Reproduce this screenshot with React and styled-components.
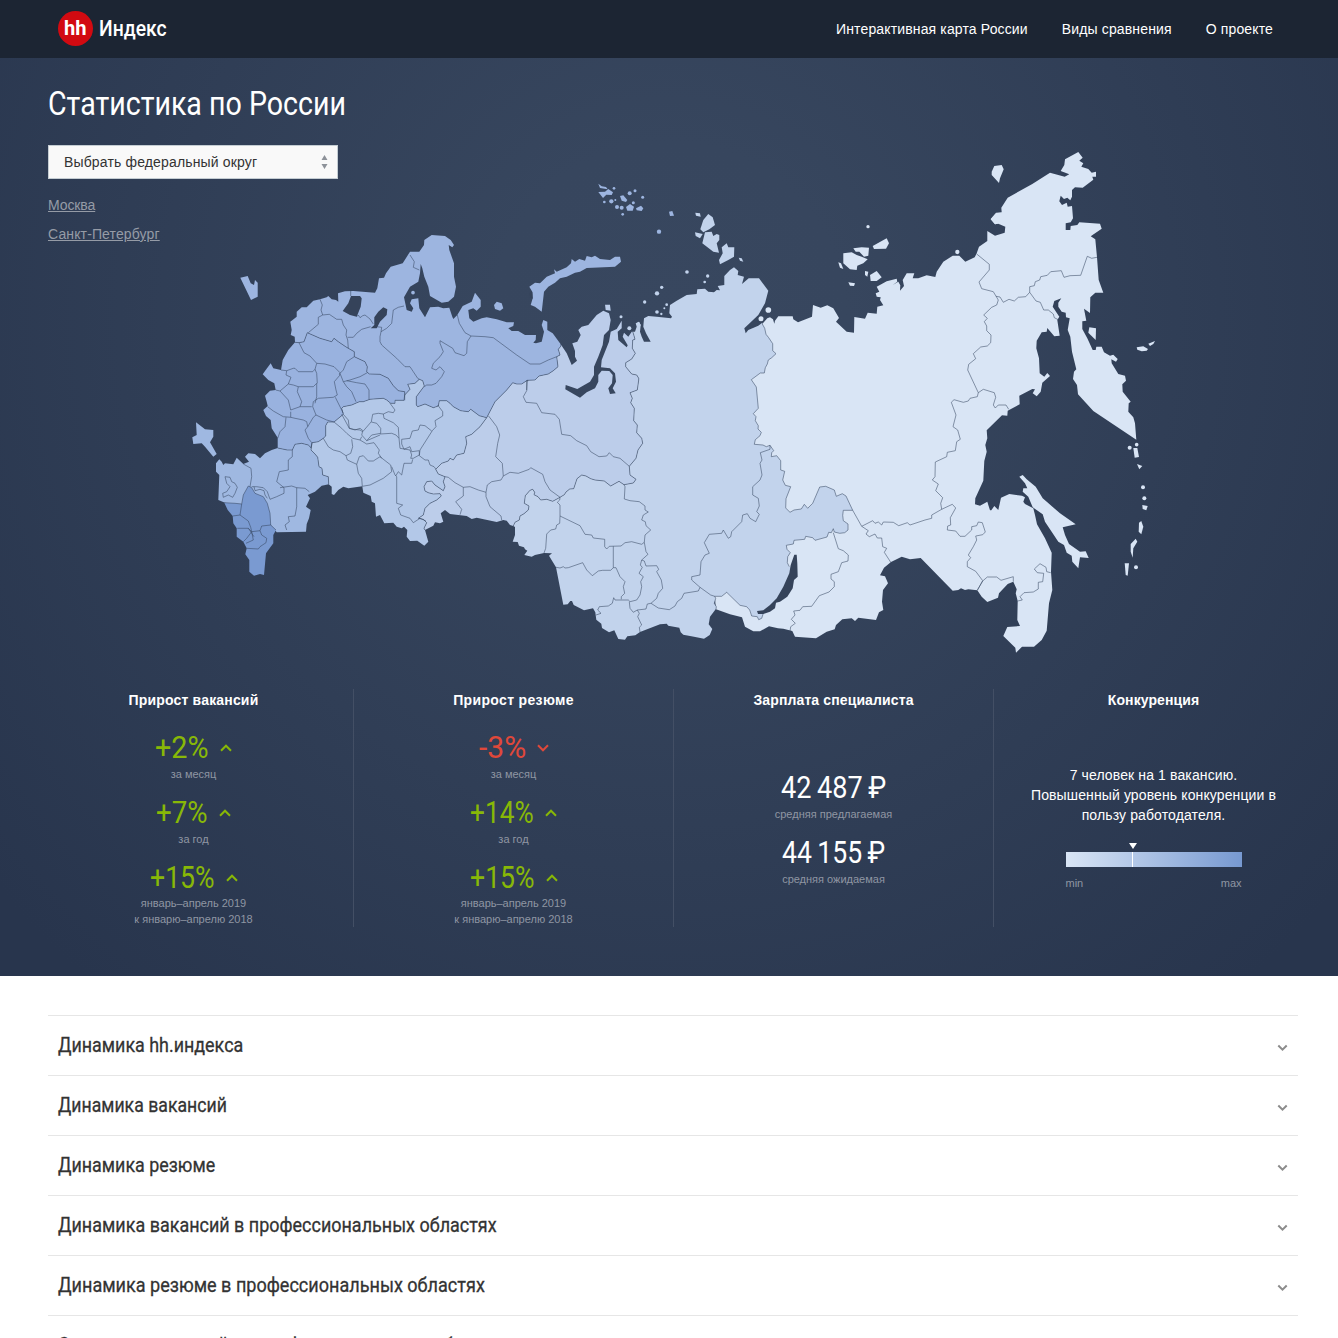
import React, { useLayoutEffect, useRef, useState } from 'react';
import styled, { createGlobalStyle } from 'styled-components';

const Global = createGlobalStyle`
  * { box-sizing: border-box; }
  html, body { margin: 0; padding: 0; }
  body {
    background: #fff;
    font-family: "Liberation Sans", Arial, sans-serif;
    font-size: 14px;
    line-height: 20px;
    color: #333;
    height: 1338px;
    overflow: hidden;
  }
`;

/* ---------- condensed display text ---------- */

const FitBox = styled.span`
  display: inline-block;
  width: ${(p) => p.$w}px;
  white-space: nowrap;
  text-align: left;
`;
const FitInner = styled.span`
  display: inline-block;
  transform-origin: 0 50%;
`;

function Condensed({ w, children }) {
  const ref = useRef(null);
  const [scale, setScale] = useState(1);
  useLayoutEffect(() => {
    setScale(w / ref.current.offsetWidth);
  }, [w, children]);
  return (
    <FitBox $w={w}>
      <FitInner ref={ref} style={{ transform: `scaleX(${scale})` }}>{children}</FitInner>
    </FitBox>
  );
}

/* ---------- map geometry ---------- */

const sheet = (ox, oy) => (text) => {
  const n = text.trim().split(/\s+/).map(Number);
  const out = [];
  for (let i = 0; i + 1 < n.length; i += 2) out.push([ox + n[i] / 3, oy + n[i + 1] / 3]);
  return out;
};
const west = sheet(180, 220);
const north = sheet(440, 160);
const mid = sheet(400, 380);
const taimyr = sheet(680, 200);
const baikal = sheet(680, 430);
const chukotka = sheet(940, 130);
const pacific = sheet(900, 380);

const rev = (pts) => [...pts].reverse();
const toPath = (pts, close) =>
  'M' + pts.map(([x, y]) => `${x.toFixed(1)} ${y.toFixed(1)}`).join('L') + (close ? 'Z' : '');

const COLORS = {
  nw: '#9db5e0',
  central: '#99b2df',
  south: '#9fb8e1',
  caucasus: '#7a9ad1',
  volga: '#b3c8e8',
  ural: '#bccdea',
  siberia: '#c2d3ec',
  east: '#d9e5f5',
  water: '#35435a',
};

const siberiaEast = [
  ...taimyr(`247 372 254 385 258 403 266 413 278 431 278 452 288 461 275 473 265 480 262 492 256 503 253 519 241 519 214 539 229 561 235 625 220 641 228 650 226 662 235 677 234 687 244 697 240 707 226 719 223 733`),
  ...baikal(`249 45 259 50 270 46 281 62 275 68 274 80 290 77 302 92 302 120 314 124 308 150 316 166 332 170 318 206 317 234 330 247 342 240 364 237 373 223 383 235 398 220 419 171 437 169 463 180 469 199 487 191 498 198 518 241 490 241 488 256 490 272 504 282 504 300 494 308 479 310 463 306 460 296 454 308 446 307 441 321 405 331 398 323 377 319 374 328 342 331 340 342 319 346 321 358 331 368 323 380 322 398 328 410`),
];
const baikalShore = baikal(`336 415 334 440 318 475 300 505 278 530 262 545`);
const siberiaSouthEast = baikal(`250 550 245 565 236 569 232 560 215 558 209 540 200 530 180 526 140 487 125 499 104 499 107 505 103 520 109 530 108 538`);
const siberiaCoastSouth = mid(`948 686 930 710 926 733 937 747 929 765 912 776 882 770 850 764 842 757 838 743 805 737 800 731 780 733 720 756 706 766 682 769 675 779 655 777 643 751 627 757 606 744 604 731 589 719 586 697 579 685 552 691 521 675 516 663 511 663 503 673 490 674 468 562 447 527 456 520 432 519 405 525 395 530 373 525 382 512 375 508 372 502 357 497 353 486 338 485 345 465 345 441 340 438`);
const siberiaWest = [
  ...mid(`340 438 345 427 358 420 360 408 372 401 385 390 387 378 373 370 376 347 390 331 398 328 404 337 402 344 414 350 422 360 440 358 458 364 480 352 493 344 498 336 509 327 521 326 531 296 545 285 558 288 572 296 585 300 613 303 632 318 657 304 672 314 700 309 708 298 690 285 688 259 708 235 714 210 728 190 725 175 710 158 712 135 701 122 703 85 692 68 697 55 690 38 712 30 716 0`),
  ...north(`596 655 590 645 575 642 557 620 557 608 575 597 586 580 577 565 578 540 585 538 580 520 578 515`),
];
const siberiaCoastNorth = north(`585 515 590 500 587 490 597 485 602 495 600 515 605 530 612 545 632 545 618 520 610 500 612 475 625 468 650 470 693 475 696 470 688 460 690 435 710 422 740 405 770 402 772 388 795 386 805 395 822 397 830 390 840 391 833 378 853 375 853 348 870 330 882 322 895 333 893 345 912 350 906 372 926 355 957 355 985 392 975 430 955 465 913 505 917 520 925 510 955 497 967 488`);
const siberia = [...siberiaEast, ...baikalShore, ...siberiaSouthEast, ...siberiaCoastSouth, ...siberiaWest, ...siberiaCoastNorth];

const east = [
  ...taimyr(`245 374 262 355 270 352 279 358 283 371 285 362 295 349 338 349 340 358 354 367 396 350 399 315 422 323 442 316 460 325 477 354 468 365 500 395 522 398 523 351 555 356 563 338 590 341 592 320 610 316 600 300 602 292 590 290 587 280 598 275 590 260 620 244 650 236 652 245 638 255 655 245 661 256 660 272 672 258 668 240 680 220 703 220 698 235 715 235 740 226 766 231 770 215 790 185 818 167 838 167 856 185 884 172 890 160`),
  ...chukotka(`117 350 142 333 142 303 165 317 194 308 196 290 175 281 165 283 152 268 170 249 185 247 184 233 203 203 277 162 330 128 374 140 388 133 362 123 373 105 375 88 415 66 428 83 418 92 430 100 424 110 445 117 455 128 468 125 468 140 457 140 460 149 428 173 405 172 396 180 396 200 391 211 382 203 372 207 362 197 358 214 366 225 380 218 383 230 396 228 399 265 392 277 377 280 377 300 391 300 392 288 412 285 418 277 480 281 485 296 452 319 466 328 471 382 476 450 490 488 466 488 451 502 450 549 432 536 439 572 427 574 427 597 442 625 458 660 467 660 469 650 485 650 492 667 510 677 520 674 533 687 528 695 514 688 515 700 535 732 555 737 558 752 547 763 548 785 572 815 566 820 565 845 580 862 585 880 589 929 460 843 414 793 411 765 399 747 402 725 409 718 396 665 391 620 383 600 389 565 378 562 377 548 365 545 355 530 355 518 364 505 343 513 338 530 358 560 352 570 359 617 343 619 322 594 320 605 305 607 290 632 289 655 297 685 299 730 313 740 322 729 330 738 307 758 302 785 290 799 278 790 285 778 277 777 238 797 239 823 203 842 202 857 186 856 140 901`),
  ...pacific(`262 175 256 195 260 215 253 243 250 302 226 355 225 373 240 377 262 365 270 391 274 391 283 378 295 390 303 353 328 342 366 347 375 352 370 365 375 372 400 385 405 405 411 433 435 475 455 518 453 575 457 630 447 670 440 752 425 780 402 800 366 800 348 818 346 803 310 768 322 741 360 738 352 720 353 663 347 640 350 628 340 605 323 612 297 640 294 653 262 666 245 650 232 631 205 628 195 630 183 625 175 630 158 632 62 534 30 538 5 530`),
  ...baikal(`633 396 612 413 600 436 615 439 624 460 609 480 606 515 610 540 597 547 588 570 535 563 525 573 515 565 487 568 468 585 464 598 440 605 408 625 345 620 337 603 310 596 294 595 267 589 240 604 220 604 195 590 186 562 150 553 108 538 104 499 160 480 200 400 180 100`),
  ...taimyr(`180 500 228 400`),
];

const nwUral = north(`362 553 363 558 355 568 360 585 350 590 354 620 340 632 325 642 297 648 285 660 262 661 245 672 230 672 218 668 200 690 165 725 140 773`);
const volgaUral = mid(`260 113 240 140 215 163 197 170 200 190 192 220 170 225 160 240 150 235 145 243 125 250 107 268 115 282 135 290 130 305 135 320 130 332 105 315 95 303 80 305 72 320 75 333 85 338 100 342 120 341 124 348 110 360 90 370 75 385 70 405 55 415 70 418 80 428 72 445 75 450`);
const ural = [
  ...north(`362 553 380 580 395 615 411 602 405 590 405 573 397 550 412 545 422 525 415 510 425 500 445 495 470 465 490 452 507 460 512 480 507 510 492 525 488 555 475 590 462 620 462 645 450 665 412 687 377 675 376 688 420 713 440 697 465 685 475 665 475 645 485 632 508 633 518 645 516 670 505 685 510 702 527 700 518 685 528 665 525 640 510 625 483 622 485 600 507 545 512 515 530 507 545 482 545 505 533 515 535 540 560 562 563 556 548 530 552 518 565 530 575 515 578 515`),
  ...rev(siberiaWest),
  ...mid(`330 435 320 422 310 420 290 426 230 413 215 417 200 408 150 402 135 390 122 400 130 425 120 430 105 427 100 437 75 450`),
  ...rev(volgaUral),
  ...rev(nwUral),
];

const nwVolga = west(`920 593 898 587 872 568 865 575 842 572 820 560 810 550 800 542 778 542 775 558 760 563 735 552 713 560 709 555 709 530 733 498 728 482 718 478 705 490 683 493 690 508 674 525 672 541`);
const centralVolga = west(`672 541 645 541 645 550 632 550 620 540 610 535 570 538 550 545 538 545 515 555 490 560 485 565 490 583 462 606 443 606 437 617 437 648 430 655 415 665 396 668`);
const southVolga = west(`396 668 393 690 405 702 413 712 417 740 426 745 428 765 445 770 446 793`);
const volga = [
  ...nwVolga, ...centralVolga, ...southVolga,
  ...west(`455 800 455 822 462 825 475 810 490 800 505 805 547 799 550 818 572 828 575 845 585 850 588 890 600 885 613 910 640 908 650 920 665 925 672 920 682 930 680 950 690 963 712 962 733 977 745 965 735 930`),
  ...rev(volgaUral),
];

const nwCentral = west(`674 541 674 515 655 512 640 497 625 475 600 463 568 462 560 455 562 440 555 425 523 410 523 395 505 385 497 380 475 365 462 355 455 365 420 355 382 338 372 365 357 368 345 367`);
const nw = [
  ...west(`345 367 344 350 332 345 335 330 331 305 350 290 350 275 365 262 380 262 400 242 420 238 440 232 445 228 455 238 468 240 475 245 474 220 495 214 520 213 585 218 592 205 597 175 612 173 618 160 632 140 668 130 690 95 718 95 732 75 733 60 755 45 795 48 812 60 822 75 817 82 806 75 808 90 822 130 822 170 828 200 822 230 805 245 785 248 750 228 745 200 733 170 727 145 722 132 720 160 715 185 690 200 672 232 680 270 695 275 700 265 690 250 695 238 715 235 718 265 735 292 750 262 775 260 790 265 808 263 817 290 820 297 832 285`),
  ...north(`68 438 95 425 105 398 122 420 122 440 110 452 100 445 85 450 88 475 100 485 125 475 140 472 170 478 200 487 222 487 220 498 205 505 215 513 235 513 255 525 288 525 287 540 280 548 288 550 305 545 312 515 305 495 310 480 322 485 322 510 338 520`),
  ...nwUral, ...nwVolga, ...nwCentral,
];

const centralSouth = west(`396 668 393 683 385 675 365 670 345 673 337 690 322 690 293 684`);
const central = [
  ...rev(nwCentral), ...centralVolga, ...centralSouth,
  ...west(`293 653 275 625 272 600 258 588 250 570 263 558 260 545 255 527 270 512 287 510 283 490 265 480 248 463 255 453 272 430 280 445 303 450 308 420 325 390`),
];

const south = [
  ...rev(centralSouth), ...southVolga,
  ...west(`425 797 405 815 383 825 390 835 378 860 392 870 387 895 380 912 378 935 290 937 272 915 200 870 135 848 115 840 118 765 108 755 108 730 118 718 125 725 130 735 135 730 160 733 170 713 190 732 207 725 195 710 205 700 225 702 240 715 255 700 275 690`),
];
const caucasus = west(`205 798 215 803 225 820 250 830 262 850 270 880 272 915 288 930 280 945 280 970 258 1000 252 1065 240 1062 222 1067 208 1055 208 1020 196 1003 200 985 190 965 170 950 170 925 160 910 158 888 143 870 133 848 165 850 185 852 190 825`);

const REGIONS = [
  ['east', east], ['ural', ural], ['siberia', siberia], ['volga', volga],
  ['nw', nw], ['central', central], ['south', south], ['caucasus', caucasus],
];

const ISLES = [
  ['south', west, ['48 607 75 628 100 630 100 650 90 667 110 702 100 710 75 680 65 670 40 672 37 652 50 645']],
  ['nw', west, ['181 173 203 168 212 190 222 195 225 180 233 188 233 230 213 240']],
  ['ural', north, ['495 434 510 434 512 452 497 450']],
  ['nw', north, [
    '305 455 285 440 272 435 278 415 277 395 268 380 285 368 300 370 320 350 345 340 342 328 350 335 380 322 393 310 395 297 405 305 418 297 435 302 440 288 455 292 465 287 480 297 510 300 525 290 540 290 543 305 525 320 440 324 420 335 405 338 380 350 360 355 345 368 325 380 312 395 308 430',
    '162 435 170 425 185 430 190 445 180 452 165 447',
    '475 71 485 79 498 81 503 88 480 84', '475 96 495 95 505 87 519 97 515 105 499 104 489 114',
    '540 108 550 106 562 120 558 126 545 122', '558 141 570 132 582 140 578 152 562 152',
    '588 145 603 137 610 145 605 153 590 151', '687 155 697 153 702 167 690 168',
  ]],
  ['siberia', north, [
    '766 158 780 160 782 170 768 167', '805 162 818 172 825 195 808 208 790 217 781 208 790 180',
    '765 217 788 222 780 235 767 228', '795 217 815 215 820 228 830 222 838 225 838 240 830 250 837 278 820 275 787 250',
    '860 250 865 262 883 262 882 290 865 300 840 313 837 300 848 280 845 262', '896 293 905 295 910 305 900 302',
    '590 490 597 485 602 495 598 503',
  ]],
  ['east', taimyr, [
    '578 138 605 123 620 115 627 130 618 146 582 147', '520 145 545 142 567 143 565 167 552 170 538 155 527 155',
    '490 160 515 157 530 165 545 170 563 178 550 190 532 197 530 210 510 208 490 190',
    '475 187 483 190 490 207 480 203', '555 213 565 215 562 230 555 225',
    '570 225 590 213 605 232 590 243 572 243', '505 247 525 250 522 258 510 257', '932 57 948 38 965 38 970 66 945 73',
  ]],
  ['east', chukotka, [
    '155 125 163 108 185 105 191 118 180 145 177 159 155 135', '448 592 468 595 467 630 445 608',
    '590 652 610 649 624 657 620 662 605 664 592 659', '625 641 645 633 640 642 630 648',
  ]],
  ['east', pacific, [
    '700 204 712 204 717 231 704 233', '711 252 727 258 718 268', '727 375 743 378 739 391 728 387',
    '717 428 724 423 730 440 724 463 716 455', '707 476 712 485 700 505 698 533 692 515 692 492',
    '674 550 687 550 683 587 677 585',
    '358 290 368 285 380 298 407 320 428 355 480 400 527 433 488 442 495 465 507 492 540 515 557 514 566 534 540 532 535 565 517 545 515 527 500 518 492 495 475 485 435 425 428 403 398 382 385 350 368 335 370 325 382 325 375 310',
  ]],
];

const DOTS = [
  ['nw', north, '569 100 6 585 92 4.5 608 112 4.5 514 124 6.5 493 126 4 526 120 3 531 141 6 545 143 6 580 128 4.5 548 163 4 522 85 4 657 215 6.5'],
  ['nw', west, '699 218 5.5'],
  ['siberia', north, '741 336 5.5 803 348 5 794 366 4 665 382 5 651 400 6.5 614 426 5 651 456 5.5 664 462 3.5 680 434 4 673 445 3 543 470 4.5 568 505 6'],
  ['east', taimyr, '265 330 8.5 243 356 7.5 564 80 5 832 156 6.5'],
  ['east', pacific, '710 194 5.5 689 203 6 729 322 6 733 355 6 708 562 6'],
];

const WATERS = [
  west('513 228 540 228 545 235 542 260 530 290 510 285 488 273 505 250'),
  west('610 262 622 268 620 285 600 305 590 325 572 325 583 315 583 292 595 275'),
  baikal('343 374 350 374 352 400 353 440 342 450 338 475 322 500 300 515 288 518 285 535 270 545 250 552 234 552 231 543 250 541 270 525 290 505 310 470 328 430 332 405'),
  north('268 398 277 396 278 416 270 412'),
];

const LINES = [
  siberiaEast, siberiaSouthEast, siberiaWest, nwUral, volgaUral, nwVolga, centralVolga, southVolga, nwCentral, centralSouth,
  taimyr('890 162 928 193 928 210 897 246 905 266 940 275 955 300 950 315 935 322 911 345 922 355 913 365 920 378 920 392 933 405 932 428 922 438 902 441 880 461 887 476 866 493 863 510 895 578 892 590 870 595 865 603 850 607 822 599 814 607 828 645 819 680 833 690 841 718 830 725 826 752 802 757 800 770 766 786'),
  ...[
    '766 96 765 140 757 150 775 162 767 182 788 203 782 220 785 238 755 255 755 265 735 270 690 285 682 278 656 287 640 277 610 276 605 285 595 276 585 280 578 272 545 289 518 241',
    '785 238 817 223 827 234 811 263 812 285 803 288 802 300 827 303 840 319 855 319 875 300 875 290 890 287 895 276 907 278 916 306 908 314 887 318 890 330 880 350 865 375 872 383 862 395 862 410 887 424 908 452 892 481',
    '545 289 565 302 558 312 568 320 585 312 592 324 605 324 608 350 620 355 613 367 633 398',
    '460 308 475 356 490 362 505 375 504 393 485 398 475 425 453 433 453 447 463 455 463 470 447 486 418 497 395 529 368 530 360 541 341 543 345 555 334 568 346 580 332 590 330 604',
  ].map(baikal),
  ...[
    '232 631 248 603 262 591 290 591 303 601 340 590 340 605',
    '353 663 367 660 360 650 372 638 400 636 415 627 415 607 428 605 431 580 412 578 403 567 420 551 438 562 440 575 452 578',
  ].map(pacific),
  ...[
    '115 788 130 778 163 788 167 802 160 825 166 834 175 825 198 825 206 838',
    '168 499 180 501 190 517 207 508 223 513 235 502 257 500 269 487 269 470 283 467 286 455 299 450 302 440 322 436 332 425 364 422 372 442 390 437 422 436 442 379 455 385 471 382',
    '269 487 288 513 301 517 311 540 325 540 340 552 343 563 355 569',
  ].map(chukotka),
  ...[
    '480 352 479 360 472 367 480 375 480 408 479 430 470 435 467 447 452 450 440 462 437 505 432 519',
    '480 408 540 437 555 463 575 465 580 474 614 478 614 500 620 507 628 499 663 498 675 488 695 485 725 493 733 487 735 465 752 450 738 437 736 425 725 420 730 405 745 396 735 390 735 378 718 365 690 362 673 357 675 320 672 314',
    '640 499 640 563 632 571 608 571 595 573 577 587 560 570 548 548 505 563 495 564 490 560 480 564 468 562',
    '640 563 648 563 660 590 675 605 670 620 674 640 664 650 664 658',
    '733 487 738 515 744 523 725 540 721 555 727 562 717 580 730 590 722 605 725 620 720 645 710 660 690 665 685 660 645 660 641 653 637 670 625 678 598 680 593 690 603 700 588 705',
    '725 540 733 543 738 558 770 557 776 568 770 575 784 600 788 625 775 640 770 655 753 670 742 672 738 687 712 690 700 697 690 685 688 665',
    '753 670 775 684 808 689 825 678 832 665 845 655 852 640 895 633 900 622',
    '712 690 718 700 713 710 725 735 718 742 720 756',
    '944 649 932 645 900 622 875 600 875 590 900 585 903 545 915 525 928 520 913 488 928 463 965 460 970 450 985 475 992 470 995 455 1025 425 1028 405 1042 401 1050 415 1067 425 1078 403 1070 395 1078 378 1075 355 1058 345 1058 320 1080 300 1086 285 1080 250 1086 240 1081 218 1110 208 1110 196',
    '135 290 145 292 165 308 190 322 190 348 167 365 185 388 180 404',
    '190 322 210 320 235 330 258 337 262 315 275 305 303 300 310 288 307 250 287 230 293 190 299 165 290 140 275 120 265 107',
    '258 337 258 350 270 380 303 408 305 420',
    '310 288 330 277 355 280 388 268 392 263 428 283 435 305 450 330 480 352',
    '385 2 380 2 380 32 370 50 378 67 410 70 425 98 465 103 478 118 485 163 512 167 530 182 560 197 572 215 597 230 620 228 628 218 640 230 660 235 688 259',
  ].map(mid),
  ...[
    '52 465 58 490 75 518 93 528 82 545 80 580 72 587 45 578 38 565 0 542',
    '93 528 135 530 160 533 230 585 270 612 300 612 325 600 350 590',
    '262 661 260 690',
  ].map(north),
  ...[
    '485 583 508 625 520 628 540 630 548 635', '490 583 505 600 508 625 525 630 540 625 550 633 574 605 578 583 595 580 610 582 625 575 640 578 645 570 630 550',
    '574 606 590 610 602 625 602 640 575 645 560 662 545 645 548 633',
    '610 582 612 595 640 608 655 622 657 655 648 645 635 640 600 642',
    '657 655 660 685 690 690 695 705 692 715 700 715 718 705 718 692 695 695 690 680 672 688 665 672 665 658 690 655 697 633 715 630 720 615 735 617 755 633',
    '773 555 788 575 788 588 765 602 768 620 757 632 720 690 718 707',
    '718 707 735 720 745 720 750 735 762 740 768 748',
    '462 606 485 625 500 640 518 655 540 660 545 650',
    '430 655 445 680 460 690 480 695 498 707 512 700 518 680 515 658',
    '498 707 502 720 530 733 538 710 550 707 565 723 580 723 600 710 632 735 635 755 610 775 570 795 547 799',
    '530 733 535 760 545 775 547 799', '540 660 560 672 582 668 598 690 595 700 605 715', '560 662 600 645',
    '635 740 645 765 650 770 650 850 668 855 655 865 662 885 690 895 700 908 720 895 738 903',
    '647 768 655 755 665 765 672 730 695 730 698 718',
    '420 238 427 255 423 270 428 285 415 292 415 313 385 338',
    '428 285 448 283 470 298 485 298 490 315 500 330 498 345 503 360 505 385',
    '503 352 520 352 530 340 545 328 572 320', '530 290 535 285 540 293 548 287 555 285 570 297 580 312',
    '512 213 512 228', '690 105 703 125 700 142 718 150',
    '672 258 655 262 640 270 635 310 620 325 603 335 600 350 600 365 605 375 650 415 675 440 690 440 700 455 713 475 718 478',
    '590 320 605 322 603 335',
    '780 362 780 370 790 395 780 410 760 430 755 445 768 450 780 440 793 455 785 470 768 490 755 495 740 495 733 500',
    '357 368 372 398 390 408 410 430 405 448 410 460 412 490',
    '303 450 320 452 340 445 345 445 355 455 398 455 405 448', '410 430 435 432 462 440 480 458 478 465',
    '320 452 318 465 333 472 325 492 300 513 287 510', '325 492 340 495 355 500 400 500 410 490 410 530 405 550',
    '523 410 500 425 490 450 480 460 490 485 510 480 540 470 562 458',
    '480 465 463 485 468 510 472 525 460 532 415 535 400 545 398 560 408 585 440 600 462 606',
    '466 532 490 580', '490 485 500 500 515 515 528 545', '500 482 530 488 555 492 567 510 567 538',
    '355 500 352 515 365 545 360 560 395 560', '300 513 325 540 332 570 360 560', '263 560 280 573 310 590 332 592 332 575',
    '332 592 345 595 370 600 380 605 383 620 400 592 408 585', '318 592 315 620 300 635 293 655', '383 620 375 630 385 655 395 668',
    '190 732 213 745 215 770 210 800', '215 800 230 800 250 803 262 815 270 838 290 830 312 820 312 803 290 785 298 755 325 750 325 720 337 710 337 690',
    '300 803 335 798 350 803 375 805 388 815', '350 803 350 860 345 888 325 890 328 905 315 915 320 930',
    '135 770 150 772 155 785 165 790 172 802 165 820 158 832 145 825 130 832 128 820 140 815 150 800 140 790 135 770',
    '222 800 225 812 240 808 252 812 255 825 262 835',
    '205 798 215 803 225 820 250 830 262 850 270 880 272 915 288 930',
    '133 848 165 850 185 852 190 825 205 798',
    '185 852 180 885 158 888', '180 885 205 903 212 922 215 935 240 932 245 918 272 915',
    '172 925 205 925 215 935 200 955 190 965', '215 935 220 960 198 970', '240 932 245 945 260 955 258 968 240 980 235 987 200 985', '205 925 222 950',
  ].map(west),
];

const MapSvg = styled.svg`
  grid-area: 1 / 1;
  display: block;
  width: 1338px;
  height: 631px;
`;

function RussiaMap() {
  return (
    <MapSvg viewBox="0 58 1338 631">
      {REGIONS.map(([key, pts]) => (
        <path key={key} d={toPath(pts, true)} fill={COLORS[key]} />
      ))}
      {ISLES.map(([key, at, list], i) =>
        list.map((s, j) => <path key={`${i}-${j}`} d={toPath(at(s), true)} fill={COLORS[key]} />)
      )}
      {DOTS.map(([key, at, text], i) => {
        const n = text.split(' ').map(Number);
        const dots = [];
        for (let k = 0; k < n.length; k += 3) {
          const [[x, y]] = at(`${n[k]} ${n[k + 1]}`);
          dots.push(<circle key={`${i}-${k}`} cx={x} cy={y} r={n[k + 2] / 3} fill={COLORS[key]} />);
        }
        return dots;
      })}
      {WATERS.map((pts, i) => <path key={i} d={toPath(pts, true)} fill={COLORS.water} />)}
      <path d={LINES.map((l) => toPath(l, false)).join('')} fill="none" stroke="#35455f" strokeOpacity="0.68" strokeWidth="0.8" strokeLinejoin="round" />
    </MapSvg>
  );
}

/* ---------- header ---------- */

const Header = styled.header`
  height: 58px;
  background: #1c2533;
  display: flex;
  align-items: center;
  justify-content: space-between;
  padding: 0 65px 0 58px;
`;
const Logo = styled.div`
  display: flex;
  align-items: center;
  gap: 6px;
  color: #fff;
  font: 500 21.5px/35px Roboto, sans-serif;
  padding-bottom: 1px;
`;
const LogoMark = styled.span`
  width: 35px;
  height: 35px;
  border-radius: 50%;
  background: #d20a11;
  font: 700 21px/35px Roboto, sans-serif;
  text-align: center;
`;
const Nav = styled.nav`
  display: flex;
  gap: 34px;
  color: #fff;
  letter-spacing: 0.14px;
`;

/* ---------- hero ---------- */

const Hero = styled.section`
  height: 918px;
  background: radial-gradient(circle 880px at 669px 260px, #38475f 0%, #37465e 20%, #28354d 100%);
`;
const Stage = styled.div`
  display: grid;
  height: 631px;
`;
const Intro = styled.div`
  grid-area: 1 / 1;
  z-index: 1;
  justify-self: start;
  align-self: start;
  padding: 26px 0 0 48px;
  display: flex;
  flex-direction: column;
  align-items: flex-start;
`;
const Title = styled.h1`
  margin: 0 0 21px;
  font: 400 33px/40px Roboto, sans-serif;
  color: #fff;
`;
const Select = styled.div`
  width: 290px;
  height: 34px;
  background: #f9f9f9;
  border: 1px solid #c4cdd3;
  display: flex;
  align-items: center;
  justify-content: space-between;
  padding: 0 9px 0 15px;
  color: #333;
  letter-spacing: 0.15px;
  margin-bottom: 16px;
`;
const CityLink = styled.a`
  color: #959ba6;
  text-decoration: underline;
  letter-spacing: ${(p) => p.$track}px;
  margin-bottom: 9px;
`;

/* ---------- statistics ---------- */

const Stats = styled.div`
  display: grid;
  grid-template-columns: repeat(4, 320px);
  padding-left: 34px;
  height: 238px;
`;
const Column = styled.div`
  border-right: 1px solid ${(p) => (p.$last ? 'transparent' : '#434f65')};
  display: flex;
  flex-direction: column;
  align-items: center;
  text-align: center;
  color: #fff;
`;
const ColumnTitle = styled.div`
  font-weight: 700;
  line-height: 22px;
  letter-spacing: ${(p) => p.$track}px;
  margin-bottom: ${(p) => p.$gap}px;
`;
const Metric = styled.div`
  height: 65px;
  display: flex;
  flex-direction: column;
  align-items: center;
`;
const Value = styled.div`
  font: 400 32px/38px Roboto, sans-serif;
  height: 38px;
  margin-bottom: ${(p) => (p.$tight ? -1 : 0)}px;
  display: flex;
  align-items: center;
  gap: 11px;
  color: ${(p) => p.$color || '#fff'};
  svg { margin-top: 1px; }
`;
const Note = styled.div`
  font-size: 11px;
  line-height: 16px;
  color: #8f96a3;
  white-space: pre-line;
`;
const Rival = styled.p`
  margin: 0 0 18px;
  white-space: pre;
  letter-spacing: 0.12px;
`;
const Scale = styled.div`
  width: 176px;
`;
const Pointer = styled.div`
  display: flex;
  padding-left: 63px;
  height: 9px;
`;
const Bar = styled.div`
  height: 15px;
  background: linear-gradient(90deg, #d9e5f5, #7799d1);
  padding-left: 66px;
`;
const Tick = styled.div`
  width: 1px;
  height: 15px;
  background: #fff;
`;
const Ends = styled.div`
  display: flex;
  justify-content: space-between;
  margin-top: 8px;
`;

const Chevron = ({ down, color = 'currentColor' }) => (
  <svg width="12" height="8" viewBox="0 0 12 8">
    <path d={down ? 'M1 1.3 6 6.3 11 1.3' : 'M1 6.7 6 1.7 11 6.7'} fill="none" stroke={color} strokeWidth="2" />
  </svg>
);

const GREEN = '#88b807';
const RED = '#e0483a';
const PERIOD = 'январь–апрель 2019\nк январю–апрелю 2018';

const GROWTH = [
  ['Прирост вакансий', 0.17, [['+2%', 54, 'за месяц'], ['+7%', 52, 'за год'], ['+15%', 65, PERIOD]]],
  ['Прирост резюме', 0.34, [['-3%', 47, 'за месяц'], ['+14%', 64, 'за год'], ['+15%', 65, PERIOD]]],
];

/* ---------- accordion ---------- */

const List = styled.main`
  padding: 39px 40px 0 48px;
`;
const Item = styled.div`
  height: 60px;
  border-top: 1px solid #e6e6e6;
  padding: 0 10px 2px;
  display: flex;
  align-items: center;
  justify-content: space-between;
  font: 400 20.5px/30px Roboto, sans-serif;
  -webkit-text-stroke: 0.3px #333;
  color: #333;
  svg { margin-top: 6px; }
`;

const ITEMS = [
  ['Динамика hh.индекса', 185],
  ['Динамика вакансий', 169],
  ['Динамика резюме', 157],
  ['Динамика вакансий в профессиональных областях', 439],
  ['Динамика резюме в профессиональных областях', 427],
  ['Структура вакансий по профессиональным областям', 457],
];

export default function App() {
  return (
    <>
      <Global />
      <Header>
        <Logo>
          <LogoMark><Condensed w={23}>hh</Condensed></LogoMark>
          <Condensed w={67.5}>Индекс</Condensed>
        </Logo>
        <Nav>
          <span>Интерактивная карта России</span>
          <span>Виды сравнения</span>
          <span>О проекте</span>
        </Nav>
      </Header>
      <Hero>
        <Stage>
          <RussiaMap />
          <Intro>
            <Title><Condensed w={298}>Статистика по России</Condensed></Title>
            <Select>
              Выбрать федеральный округ
              <svg width="7" height="16" viewBox="0 0 7 16">
                <path d="M3.5 1 6.5 6h-6zM3.5 15 .5 10h6z" fill="#8d9299" />
              </svg>
            </Select>
            <CityLink $track={-0.1}>Москва</CityLink>
            <CityLink $track={0.13}>Санкт-Петербург</CityLink>
          </Intro>
        </Stage>
        <Stats>
          {GROWTH.map(([title, track, rows]) => (
            <Column key={title}>
              <ColumnTitle $gap={17} $track={track}>{title}</ColumnTitle>
              {rows.map(([value, w, note]) => {
                const down = value[0] === '-';
                return (
                  <Metric key={value + note}>
                    <Value $color={down ? RED : GREEN} $tight={note === PERIOD}>
                      <Condensed w={w}>{value}</Condensed>
                      <Chevron down={down} />
                    </Value>
                    <Note>{note}</Note>
                  </Metric>
                );
              })}
            </Column>
          ))}
          <Column>
            <ColumnTitle $gap={57} $track={0.12}>Зарплата специалиста</ColumnTitle>
            <Metric><Value><Condensed w={105}>{'42\u2009487\u2009₽'}</Condensed></Value><Note>средняя предлагаемая</Note></Metric>
            <Metric><Value><Condensed w={103}>{'44\u2009155\u2009₽'}</Condensed></Value><Note>средняя ожидаемая</Note></Metric>
          </Column>
          <Column $last>
            <ColumnTitle $gap={54} $track={0.1}>Конкуренция</ColumnTitle>
            <Rival>{'7 человек на 1 вакансию.\nПовышенный уровень конкуренции в\nпользу работодателя.'}</Rival>
            <Scale>
              <Pointer>
                <svg width="8" height="6" viewBox="0 0 8 6"><path d="M0 0h8L4 6z" fill="#fff" /></svg>
              </Pointer>
              <Bar><Tick /></Bar>
              <Ends><Note>min</Note><Note>max</Note></Ends>
            </Scale>
          </Column>
        </Stats>
      </Hero>
      <List>
        {ITEMS.map(([label, w]) => (
          <Item key={label}>
            <Condensed w={w}>{label}</Condensed>
            <svg width="11" height="8" viewBox="0 0 11 8">
              <path d="M1.3 1.5 5.5 5.7 9.7 1.5" fill="none" stroke="#8c8c8c" strokeWidth="2" />
            </svg>
          </Item>
        ))}
      </List>
    </>
  );
}
